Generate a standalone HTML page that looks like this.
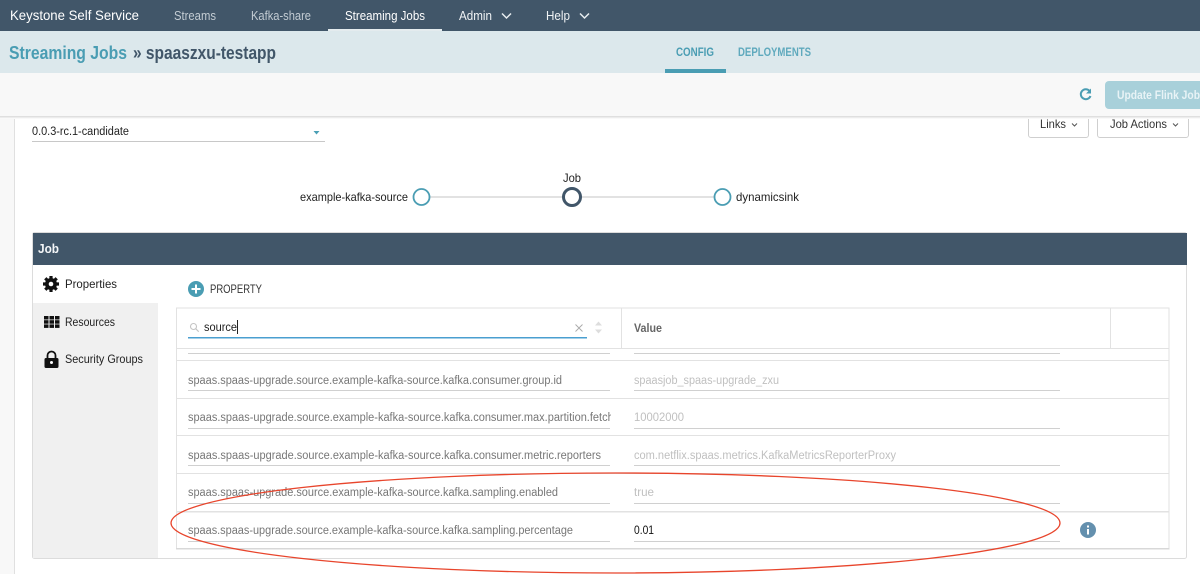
<!DOCTYPE html>
<html><head><meta charset="utf-8"><title>Streaming Jobs</title>
<style>
html,body{margin:0;padding:0;background:#fff;width:1200px;height:574px;overflow:hidden}
svg{display:block}
text{font-family:"Liberation Sans",sans-serif;font-size:11.500px}
</style></head><body>
<svg width="1200" height="574" viewBox="0 0 1200 574" xmlns="http://www.w3.org/2000/svg">
<defs><linearGradient id="s" x1="0" y1="0" x2="0" y2="1"><stop offset="0" stop-color="#d8d8d8"/><stop offset="1" stop-color="#fff"/></linearGradient></defs>
<rect width="1200" height="574" fill="#fff"/>
<rect x="0" y="116" width="14" height="458" fill="#f8f8f8"/>
<rect x="14" y="116" width="1" height="458" fill="#e0e0e0"/>

<!-- select -->
<text x="32" y="135" fill="#222" textLength="97" lengthAdjust="spacingAndGlyphs">0.0.3-rc.1-candidate</text>
<path d="M313.500 131h6l-3 3.500z" fill="#4a9fb5"/>
<rect x="32" y="141" width="293" height="1" fill="#c8c8c8"/>

<!-- buttons -->
<rect x="1028.500" y="105" width="60" height="32.500" rx="2.500" fill="#fff" stroke="#cfcfcf"/>
<text x="1040" y="128" fill="#333" style="font-size:12px" textLength="26" lengthAdjust="spacingAndGlyphs">Links</text>
<path d="M1072 123.500l2.500 2.500 2.500-2.500" fill="none" stroke="#555"/>
<rect x="1097.500" y="105" width="91" height="32.500" rx="2.500" fill="#fff" stroke="#cfcfcf"/>
<text x="1110" y="128" fill="#333" style="font-size:12px" textLength="57" lengthAdjust="spacingAndGlyphs">Job Actions</text>
<path d="M1173 123.500l2.500 2.500 2.500-2.500" fill="none" stroke="#555"/>

<!-- header bars -->
<rect x="0" y="0" width="1200" height="31" fill="#415669"/>
<rect x="0" y="31" width="1200" height="42" fill="#dce8ec"/>
<rect x="0" y="73" width="1200" height="43" fill="#f8f8f8"/>
<rect x="0" y="116" width="1200" height="3" fill="url(#s)"/>
<rect x="328" y="29" width="114" height="2" fill="#e4ebee"/>
<rect x="665" y="69" width="61" height="4" fill="#4a9db3"/>

<text x="10" y="20" fill="#fff" style="font-size:14px" textLength="129" lengthAdjust="spacingAndGlyphs">Keystone Self Service</text>
<text x="174" y="20" fill="#c3ccd3" style="font-size:12.500px" textLength="42" lengthAdjust="spacingAndGlyphs">Streams</text>
<text x="251" y="20" fill="#c3ccd3" style="font-size:12.500px" textLength="60" lengthAdjust="spacingAndGlyphs">Kafka-share</text>
<text x="345" y="20" fill="#fff" style="font-size:12.500px" textLength="80" lengthAdjust="spacingAndGlyphs">Streaming Jobs</text>
<text x="459" y="20" fill="#f0f3f5" style="font-size:12.500px" textLength="33" lengthAdjust="spacingAndGlyphs">Admin</text>
<text x="546" y="20" fill="#f0f3f5" style="font-size:12.500px" textLength="24" lengthAdjust="spacingAndGlyphs">Help</text>
<path d="M502 13.500l4.500 4.500 4.500-4.500M580 13.500l4.500 4.500 4.500-4.500" fill="none" stroke="#e8edf0" stroke-width="1.500"/>

<text x="9" y="59" fill="#4a9db3" style="font-size:18px;font-weight:bold" textLength="118" lengthAdjust="spacingAndGlyphs">Streaming Jobs</text>
<text x="133" y="59" fill="#415669" style="font-size:18px;font-weight:bold" textLength="143" lengthAdjust="spacingAndGlyphs">» spaaszxu-testapp</text>
<text x="676" y="56" fill="#4a9db3" style="font-size:11.500px;font-weight:bold" textLength="38" lengthAdjust="spacingAndGlyphs">CONFIG</text>
<text x="738" y="56" fill="#5fa9bd" style="font-size:11.500px;font-weight:bold" textLength="73" lengthAdjust="spacingAndGlyphs">DEPLOYMENTS</text>

<!-- refresh + update -->
<path d="M1090.500 96a5 5 0 1 1-1-5.200" fill="none" stroke="#4a9db3" stroke-width="2"/>
<path d="M1091 88.500v5h-5z" fill="#4a9db3"/>
<path d="M1200 81h-91a4 4 0 0 0-4 4v20a4 4 0 0 0 4 4h91z" fill="#a8d0da"/>
<text x="1117" y="99" fill="#e8f3f6" style="font-size:12px;font-weight:bold" textLength="83" lengthAdjust="spacingAndGlyphs">Update Flink Job</text>

<!-- flow -->
<rect x="430" y="196" width="284" height="2" fill="#e2e2e2"/>
<text x="300" y="201" fill="#222" style="font-size:12px" textLength="108" lengthAdjust="spacingAndGlyphs">example-kafka-source</text>
<text x="563" y="182" fill="#222" style="font-size:12px" textLength="18" lengthAdjust="spacingAndGlyphs">Job</text>
<text x="736" y="201" fill="#222" style="font-size:12px" textLength="63" lengthAdjust="spacingAndGlyphs">dynamicsink</text>
<circle cx="421.500" cy="197" r="8" fill="#fff" stroke="#4a9db3" stroke-width="1.800"/>
<circle cx="572" cy="197" r="8.500" fill="#fff" stroke="#415669" stroke-width="3"/>
<circle cx="722.500" cy="197" r="8" fill="#fff" stroke="#4a9db3" stroke-width="1.800"/>

<!-- panel -->
<rect x="32.500" y="232.500" width="1154" height="326" rx="2" fill="#fff" stroke="#dcdcdc"/>
<rect x="33" y="233" width="1154" height="32" fill="#415669"/>
<text x="38" y="253" fill="#f4f6f8" style="font-size:13px;font-weight:bold" textLength="21" lengthAdjust="spacingAndGlyphs">Job</text>
<rect x="33" y="303" width="125" height="255" fill="#f0f0f0"/>

<!-- gear -->
<g fill="#111">
<circle cx="51" cy="284" r="6"/>
<g stroke="#111" stroke-width="3.200"><path d="M51 276v16M43 284h16M45.300 278.300l11.400 11.400M56.700 278.300l-11.400 11.400"/></g>
</g>
<circle cx="51" cy="284" r="2.300" fill="#fff"/>
<text x="65" y="288" fill="#222" style="font-size:12px" textLength="52" lengthAdjust="spacingAndGlyphs">Properties</text>
<!-- grid -->
<g fill="#111">
<rect x="44" y="316" width="4.500" height="3.500"/><rect x="49.500" y="316" width="4.500" height="3.500"/><rect x="55" y="316" width="4.500" height="3.500"/>
<rect x="44" y="320.200" width="4.500" height="3.500"/><rect x="49.500" y="320.200" width="4.500" height="3.500"/><rect x="55" y="320.200" width="4.500" height="3.500"/>
<rect x="44" y="324.400" width="4.500" height="3.500"/><rect x="49.500" y="324.400" width="4.500" height="3.500"/><rect x="55" y="324.400" width="4.500" height="3.500"/>
</g>
<text x="65" y="326" fill="#222" style="font-size:12px" textLength="50" lengthAdjust="spacingAndGlyphs">Resources</text>
<!-- lock -->
<rect x="44.500" y="358" width="14" height="10" rx="1.500" fill="#111"/>
<path d="M47.500 358v-2.500a4 4 0 0 1 8 0v2.500" fill="none" stroke="#111" stroke-width="1.800"/>
<circle cx="51.500" cy="362.500" r="1.500" fill="#fff"/>
<text x="65" y="363" fill="#222" style="font-size:12px" textLength="78" lengthAdjust="spacingAndGlyphs">Security Groups</text>

<!-- add property -->
<circle cx="196" cy="289" r="8" fill="#4a9db3"/>
<path d="M191.500 289h9M196 284.500v9" stroke="#fff" stroke-width="2"/>
<text x="210" y="293" fill="#333" style="font-size:12px" textLength="52" lengthAdjust="spacingAndGlyphs">PROPERTY</text>

<!-- table -->
<rect x="176.500" y="308" width="992.500" height="241" fill="#fff" stroke="#e2e2e2"/>
<rect x="176" y="548" width="993.500" height="1.500" fill="#d8d8d8"/>
<rect x="177" y="348" width="992" height="1" fill="#e2e2e2"/>
<rect x="621" y="308" width="1" height="40" fill="#e2e2e2"/>
<rect x="1110" y="308" width="1" height="40" fill="#e2e2e2"/>

<circle cx="193.500" cy="326.500" r="3" fill="none" stroke="#c4c4c4" stroke-width="1.100"/>
<path d="M195.700 328.700l3 3" stroke="#c4c4c4" stroke-width="1.100"/>
<text x="204" y="331" fill="#222" style="font-size:12px" textLength="33" lengthAdjust="spacingAndGlyphs">source</text>
<rect x="237" y="320" width="1" height="14" fill="#222"/>
<rect x="188" y="337" width="399" height="1.500" fill="#4a9fd0"/>
<path d="M575.500 324.500l7 7M582.500 324.500l-7 7" stroke="#aaa" stroke-width=".9"/>
<path d="M598.500 321.500l3.500 4h-7zM598.500 333.500l3.500-4h-7z" fill="#ddd"/>
<text x="634" y="332" fill="#666" style="font-weight:bold" textLength="28" lengthAdjust="spacingAndGlyphs">Value</text>

<!-- rows -->
<g fill="#e2e2e2">
<rect x="177" y="360" width="992" height="1"/>
<rect x="177" y="398" width="992" height="1"/>
<rect x="177" y="435" width="992" height="1"/>
<rect x="177" y="473" width="992" height="1"/>
<rect x="177" y="511" width="992" height="1.500"/>
</g>
<g fill="#d0d0d0">
<rect x="188" y="353" width="422" height="1"/><rect x="634" y="353" width="426" height="1"/>
<rect x="188" y="390" width="422" height="1"/><rect x="634" y="390" width="426" height="1"/>
<rect x="188" y="428" width="422" height="1"/><rect x="634" y="428" width="426" height="1"/>
<rect x="188" y="465" width="422" height="1"/><rect x="634" y="465" width="426" height="1"/>
<rect x="188" y="503" width="422" height="1"/><rect x="634" y="503" width="426" height="1"/>
<rect x="188" y="541" width="422" height="1"/><rect x="634" y="541" width="426" height="1"/>
</g>
<text x="188" y="384" fill="#777" textLength="374" lengthAdjust="spacingAndGlyphs">spaas.spaas-upgrade.source.example-kafka-source.kafka.consumer.group.id</text>
<svg x="188" y="405" width="423" height="24"><text x="0" y="16" fill="#777" textLength="455" lengthAdjust="spacingAndGlyphs">spaas.spaas-upgrade.source.example-kafka-source.kafka.consumer.max.partition.fetch.bytes</text></svg>
<text x="188" y="459" fill="#777" textLength="413" lengthAdjust="spacingAndGlyphs">spaas.spaas-upgrade.source.example-kafka-source.kafka.consumer.metric.reporters</text>
<text x="188" y="496" fill="#777" textLength="370" lengthAdjust="spacingAndGlyphs">spaas.spaas-upgrade.source.example-kafka-source.kafka.sampling.enabled</text>
<text x="188" y="534" fill="#777" textLength="385" lengthAdjust="spacingAndGlyphs">spaas.spaas-upgrade.source.example-kafka-source.kafka.sampling.percentage</text>
<text x="634" y="384" fill="#c0c0c0" textLength="145" lengthAdjust="spacingAndGlyphs">spaasjob_spaas-upgrade_zxu</text>
<text x="634" y="421" fill="#c0c0c0" textLength="50" lengthAdjust="spacingAndGlyphs">10002000</text>
<text x="634" y="459" fill="#c0c0c0" textLength="262" lengthAdjust="spacingAndGlyphs">com.netflix.spaas.metrics.KafkaMetricsReporterProxy</text>
<text x="634" y="496" fill="#c0c0c0" textLength="20" lengthAdjust="spacingAndGlyphs">true</text>
<text x="634" y="534" fill="#111" textLength="20" lengthAdjust="spacingAndGlyphs">0.01</text>

<circle cx="1088" cy="530" r="8" fill="#6490ae"/>
<rect x="1087" y="529" width="2" height="5.500" fill="#fff"/>
<rect x="1087" y="525.500" width="2" height="2" fill="#fff"/>

<ellipse cx="615.500" cy="523" rx="444.500" ry="50" fill="none" stroke="#e8452c" stroke-width="1.300"/>
</svg>
</body></html>
